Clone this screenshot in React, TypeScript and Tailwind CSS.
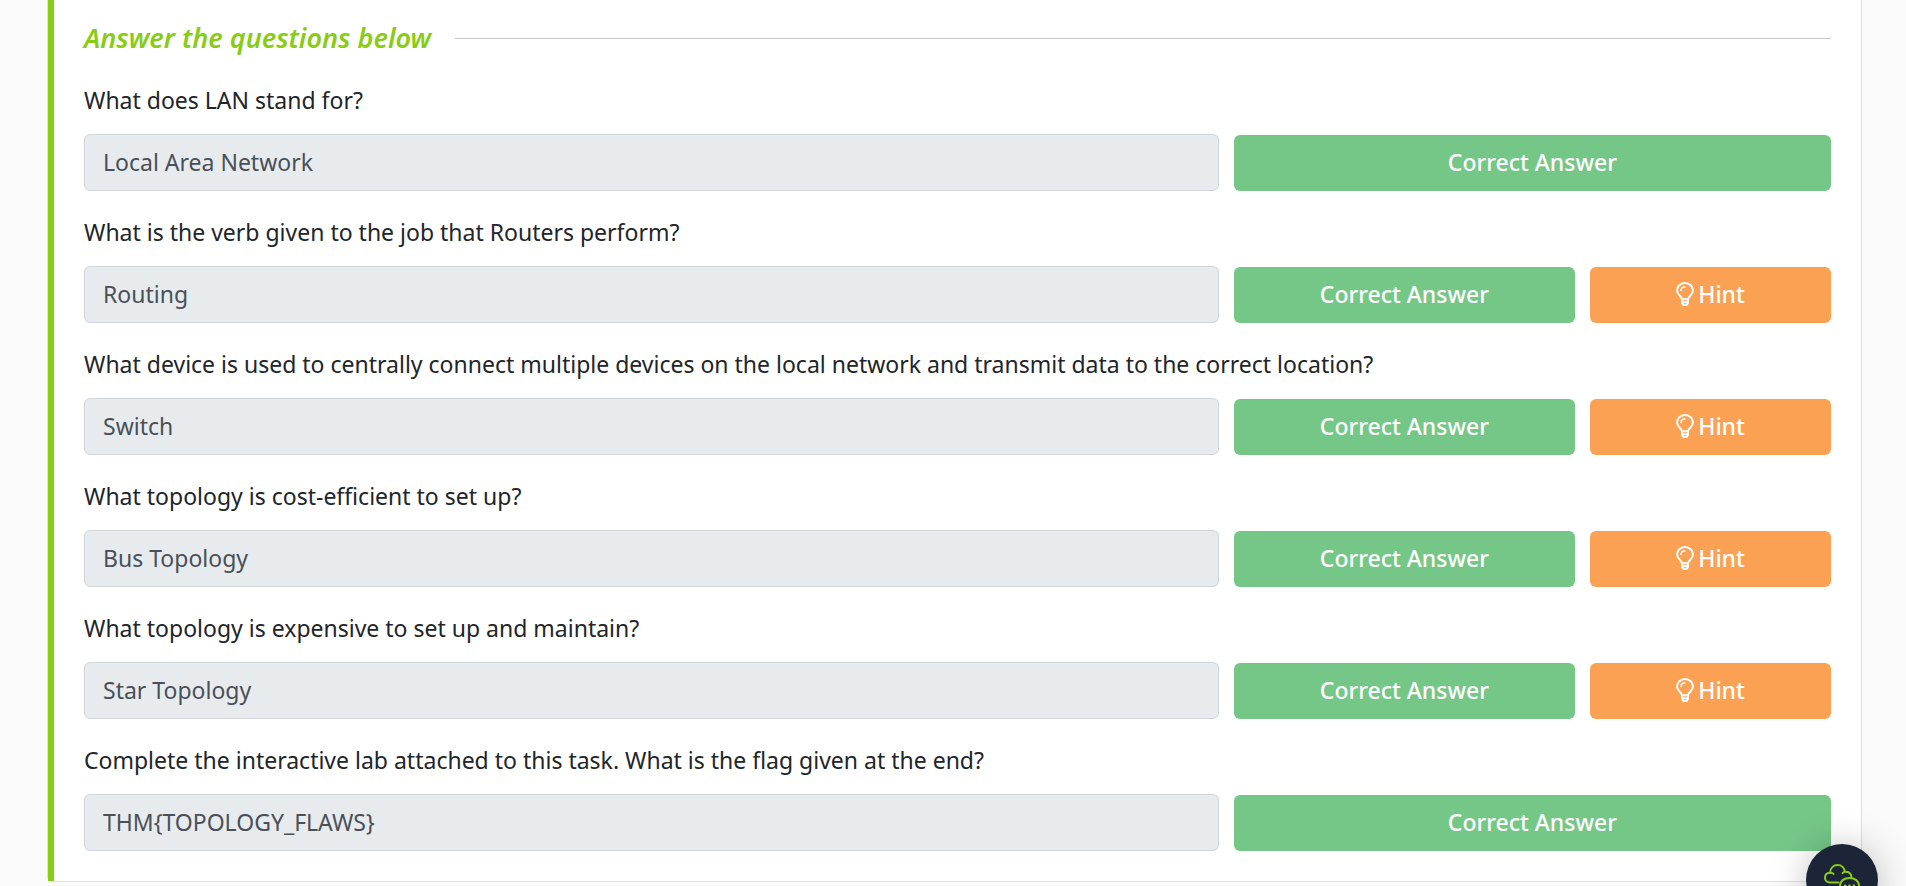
import { useId } from "react";

type Question = { text: string; answer: string; hint?: boolean };

const questions: Question[] = [
  { text: "What does LAN stand for?", answer: "Local Area Network" },
  { text: "What is the verb given to the job that Routers perform?", answer: "Routing", hint: true },
  {
    text: "What device is used to centrally connect multiple devices on the local network and transmit data to the correct location?",
    answer: "Switch",
    hint: true,
  },
  { text: "What topology is cost-efficient to set up?", answer: "Bus Topology", hint: true },
  { text: "What topology is expensive to set up and maintain?", answer: "Star Topology", hint: true },
  {
    text: "Complete the interactive lab attached to this task. What is the flag given at the end?",
    answer: "THM{TOPOLOGY_FLAWS}",
  },
];

function BulbIcon() {
  return (
    <svg viewBox="0 0 18 24" className="h-6 w-[18px]" fill="none" stroke="currentColor" strokeWidth="2" strokeLinejoin="round" aria-hidden="true">
      <path d="M6 17.2C6 14.6 1 12.8 1 8.6C1 4.400 4.400 1 9 1S17 4.400 17 8.600C17 12.800 12 14.600 12 17.200Z" />
      <path d="M5 8.400C5 6.300 6.600 4.900 8.800 4.900" strokeLinecap="round" strokeWidth="1.500" />
      <path d="M6 17.200V21L7.400 23H10.600L12 21V17.200M6 20.200H12" />
    </svg>
  );
}

function ChatIcon() {
  return (
    <svg viewBox="0 0 36 32" className="h-8 w-9" fill="none" stroke="#88cc14" strokeWidth="2" strokeLinecap="round" strokeLinejoin="round" aria-hidden="true">
      <path d="M14.5 18.5H6C3 18.5 1 16.4 1 13.7C1 10.9 3 8.9 6 8.8C6.3 4 9.5 1 13.5 1C17.5 1 20.4 3.8 20.9 7.8C24.5 7.6 27 9.6 27.4 12.8" />
      <path d="M6 8.8C7.5 8.6 8.8 9 9.6 10M20.9 7.8C19.8 8 19 8.5 18.5 9.200" />
      <path d="M25.5 14C31 14 35 17.2 35 21.5S31 29 25.5 29C24 29 22.5 28.7 21.2 28.2L17 30L18 26.2C16.7 24.9 16 23.3 16 21.5C16 17.2 20 14 25.5 14Z" />
      <path d="M20.8 21.6H21.4M25.2 21.6H25.8M29.6 21.6H30.2" />
    </svg>
  );
}

function QuestionRow({ text, answer, hint }: Question) {
  const id = useId();
  return (
    <div>
      <label htmlFor={id} className="block text-[23px] leading-9 text-[#212529]">
        {text}
      </label>
      <div className="mt-4 grid grid-cols-[19fr_10fr] items-end gap-[15px]">
        <input
          id={id}
          type="text"
          disabled
          defaultValue={answer}
          className="h-[57px] w-full min-w-0 rounded-md border border-[#ced4da] bg-[#e8ebee] px-[18px] pb-0.5 text-[23px] text-[#495057]"
        />
        <div className={hint ? "grid grid-cols-[17fr_12fr] gap-[15px]" : "grid"}>
          <button type="button" className="h-14 rounded-md bg-[#75c788] pb-0.5 text-[23px] font-medium text-white">
            Correct Answer
          </button>
          {hint && (
            <button type="button" className="flex h-14 items-center justify-center gap-1 rounded-md bg-[#fba154] pb-0.5 text-[23px] font-medium text-white">
              <BulbIcon />
              Hint
            </button>
          )}
        </div>
      </div>
    </div>
  );
}

export default function App() {
  return (
    <div className="min-h-screen bg-[#fafafa] pr-11 pl-[47px] font-['Noto_Sans',sans-serif]">
      <main className="rounded-b-md border border-t-0 border-[#dddfe1] bg-white">
        <div className="border-l-6 border-[#88cc14] pt-[18px] pr-[30px] pb-[30px] pl-[30px]">
          <div className="flex items-center gap-6">
            <h2 className="text-[27px] leading-10 font-semibold text-[#88cc14] italic">Answer the questions below</h2>
            <hr className="h-px flex-1 border-0 bg-[#c8c8c8]" />
          </div>
          <div className="mt-6 flex flex-col gap-[23px]">
            {questions.map((q) => (
              <QuestionRow key={q.answer} {...q} />
            ))}
          </div>
        </div>
      </main>
      <button
        type="button"
        aria-label="Open chat"
        className="fixed right-7 -bottom-[30px] flex size-[72px] justify-center rounded-full bg-[#1c2538] pt-5 shadow-[0_2px_36px_rgba(0,0,0,0.25)]"
      >
        <ChatIcon />
      </button>
    </div>
  );
}
